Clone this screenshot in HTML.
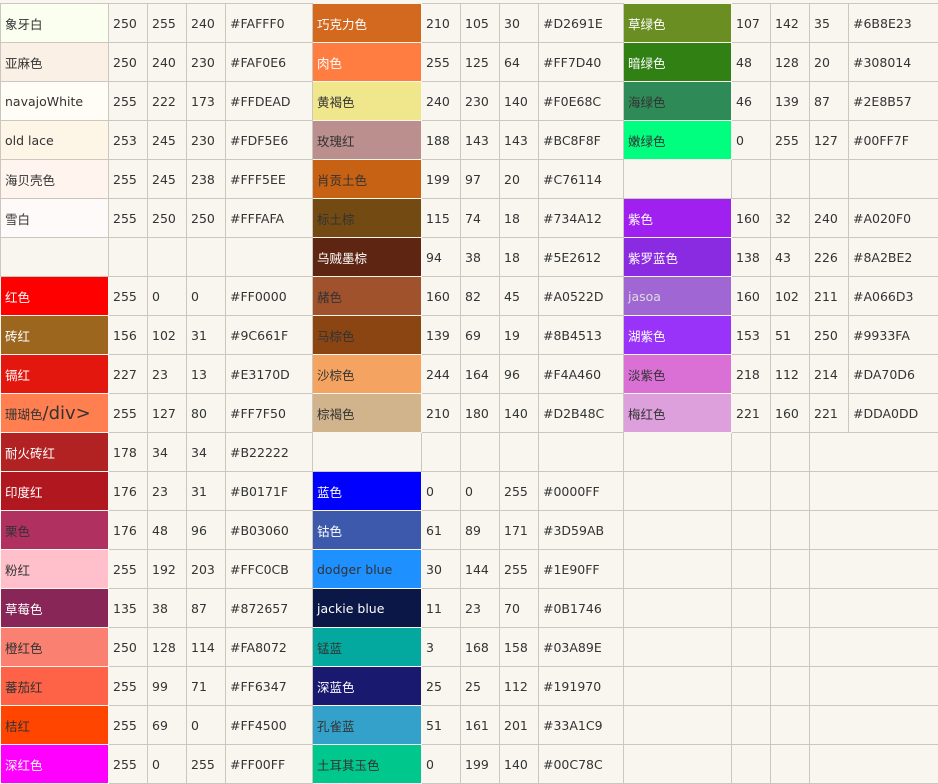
<!DOCTYPE html>
<html><head><meta charset="utf-8"><style>
html,body{margin:0;padding:0;background:#f8f6ef;width:938px;height:784px;overflow:hidden}
table{border-collapse:collapse;table-layout:fixed;position:absolute;left:0;top:3px;width:938px}
tr{height:39px}
td{height:39px;border:1px solid #cbc7bf;padding:0 0 0 4px;font:12.5px "DejaVu Sans","Noto Sans CJK SC",sans-serif;color:#333;white-space:nowrap;overflow:hidden;box-sizing:border-box}
td.w{color:#fff}
td.c{border-color:transparent}
big{font-size:18px}
</style></head><body>
<table>
<colgroup><col style="width:108px"><col style="width:39px"><col style="width:39px"><col style="width:39px"><col style="width:87px"><col style="width:109px"><col style="width:39px"><col style="width:39px"><col style="width:39px"><col style="width:85px"><col style="width:108px"><col style="width:39px"><col style="width:39px"><col style="width:39px"><col style="width:90px"></colgroup>
<tr><td style="background:#FAFFF0">象牙白</td><td>250</td><td>255</td><td>240</td><td>#FAFFF0</td><td class="c w" style="background:#D2691E">巧克力色</td><td>210</td><td>105</td><td>30</td><td>#D2691E</td><td class="c w" style="background:#6B8E23">草绿色</td><td>107</td><td>142</td><td>35</td><td>#6B8E23</td></tr>
<tr><td style="background:#FAF0E6">亚麻色</td><td>250</td><td>240</td><td>230</td><td>#FAF0E6</td><td class="c w" style="background:#FF7D40">肉色</td><td>255</td><td>125</td><td>64</td><td>#FF7D40</td><td class="c w" style="background:#308014">暗绿色</td><td>48</td><td>128</td><td>20</td><td>#308014</td></tr>
<tr><td style="background:#FFFDF5">navajoWhite</td><td>255</td><td>222</td><td>173</td><td>#FFDEAD</td><td class="c" style="background:#F0E68C">黄褐色</td><td>240</td><td>230</td><td>140</td><td>#F0E68C</td><td class="c" style="background:#2E8B57">海绿色</td><td>46</td><td>139</td><td>87</td><td>#2E8B57</td></tr>
<tr><td style="background:#FDF5E6">old lace</td><td>253</td><td>245</td><td>230</td><td>#FDF5E6</td><td class="c" style="background:#BC8F8F">玫瑰红</td><td>188</td><td>143</td><td>143</td><td>#BC8F8F</td><td class="c" style="background:#00FF7F">嫩绿色</td><td>0</td><td>255</td><td>127</td><td>#00FF7F</td></tr>
<tr><td style="background:#FFF5EE">海贝壳色</td><td>255</td><td>245</td><td>238</td><td>#FFF5EE</td><td class="c" style="background:#C76114">肖贡土色</td><td>199</td><td>97</td><td>20</td><td>#C76114</td><td></td><td></td><td></td><td></td><td></td></tr>
<tr><td style="background:#FFFAFA">雪白</td><td>255</td><td>250</td><td>250</td><td>#FFFAFA</td><td class="c" style="background:#734A12">标土棕</td><td>115</td><td>74</td><td>18</td><td>#734A12</td><td class="c w" style="background:#A020F0">紫色</td><td>160</td><td>32</td><td>240</td><td>#A020F0</td></tr>
<tr><td></td><td></td><td></td><td></td><td></td><td class="c w" style="background:#5E2612">乌贼墨棕</td><td>94</td><td>38</td><td>18</td><td>#5E2612</td><td class="c w" style="background:#8A2BE2">紫罗蓝色</td><td>138</td><td>43</td><td>226</td><td>#8A2BE2</td></tr>
<tr><td class="c w" style="background:#FF0000">红色</td><td>255</td><td>0</td><td>0</td><td>#FF0000</td><td class="c" style="background:#A0522D">赭色</td><td>160</td><td>82</td><td>45</td><td>#A0522D</td><td class="c" style="background:#A066D3;color:#ddd">jasoa</td><td>160</td><td>102</td><td>211</td><td>#A066D3</td></tr>
<tr><td class="c w" style="background:#9C661F">砖红</td><td>156</td><td>102</td><td>31</td><td>#9C661F</td><td class="c" style="background:#8B4513">马棕色</td><td>139</td><td>69</td><td>19</td><td>#8B4513</td><td class="c w" style="background:#9933FA">湖紫色</td><td>153</td><td>51</td><td>250</td><td>#9933FA</td></tr>
<tr><td class="c w" style="background:#E3170D">镉红</td><td>227</td><td>23</td><td>13</td><td>#E3170D</td><td class="c" style="background:#F4A460">沙棕色</td><td>244</td><td>164</td><td>96</td><td>#F4A460</td><td class="c" style="background:#DA70D6">淡紫色</td><td>218</td><td>112</td><td>214</td><td>#DA70D6</td></tr>
<tr><td class="c" style="background:#FF7F50">珊瑚色<big>/div&gt;</big></td><td>255</td><td>127</td><td>80</td><td>#FF7F50</td><td class="c" style="background:#D2B48C">棕褐色</td><td>210</td><td>180</td><td>140</td><td>#D2B48C</td><td class="c" style="background:#DDA0DD">梅红色</td><td>221</td><td>160</td><td>221</td><td>#DDA0DD</td></tr>
<tr><td class="c w" style="background:#B22222">耐火砖红</td><td>178</td><td>34</td><td>34</td><td>#B22222</td><td></td><td></td><td></td><td></td><td></td><td></td><td></td><td></td><td colspan="2"></td></tr>
<tr><td class="c w" style="background:#B0171F">印度红</td><td>176</td><td>23</td><td>31</td><td>#B0171F</td><td class="c w" style="background:#0000FF">蓝色</td><td>0</td><td>0</td><td>255</td><td>#0000FF</td><td></td><td></td><td></td><td colspan="2"></td></tr>
<tr><td class="c" style="background:#B03060">栗色</td><td>176</td><td>48</td><td>96</td><td>#B03060</td><td class="c w" style="background:#3D59AB">钴色</td><td>61</td><td>89</td><td>171</td><td>#3D59AB</td><td></td><td></td><td></td><td colspan="2"></td></tr>
<tr><td class="c" style="background:#FFC0CB">粉红</td><td>255</td><td>192</td><td>203</td><td>#FFC0CB</td><td class="c" style="background:#1E90FF">dodger blue</td><td>30</td><td>144</td><td>255</td><td>#1E90FF</td><td></td><td></td><td></td><td colspan="2"></td></tr>
<tr><td class="c w" style="background:#872657">草莓色</td><td>135</td><td>38</td><td>87</td><td>#872657</td><td class="c w" style="background:#0B1746">jackie blue</td><td>11</td><td>23</td><td>70</td><td>#0B1746</td><td></td><td></td><td></td><td colspan="2"></td></tr>
<tr><td class="c" style="background:#FA8072">橙红色</td><td>250</td><td>128</td><td>114</td><td>#FA8072</td><td class="c" style="background:#03A89E">锰蓝</td><td>3</td><td>168</td><td>158</td><td>#03A89E</td><td></td><td></td><td></td><td colspan="2"></td></tr>
<tr><td class="c" style="background:#FF6347">蕃茄红</td><td>255</td><td>99</td><td>71</td><td>#FF6347</td><td class="c w" style="background:#191970">深蓝色</td><td>25</td><td>25</td><td>112</td><td>#191970</td><td></td><td></td><td></td><td colspan="2"></td></tr>
<tr><td class="c" style="background:#FF4500">桔红</td><td>255</td><td>69</td><td>0</td><td>#FF4500</td><td class="c" style="background:#33A1C9">孔雀蓝</td><td>51</td><td>161</td><td>201</td><td>#33A1C9</td><td></td><td></td><td></td><td colspan="2"></td></tr>
<tr><td class="c w" style="background:#FF00FF">深红色</td><td>255</td><td>0</td><td>255</td><td>#FF00FF</td><td class="c" style="background:#00C78C">土耳其玉色</td><td>0</td><td>199</td><td>140</td><td>#00C78C</td><td></td><td></td><td></td><td colspan="2"></td></tr>
</table>
</body></html>
